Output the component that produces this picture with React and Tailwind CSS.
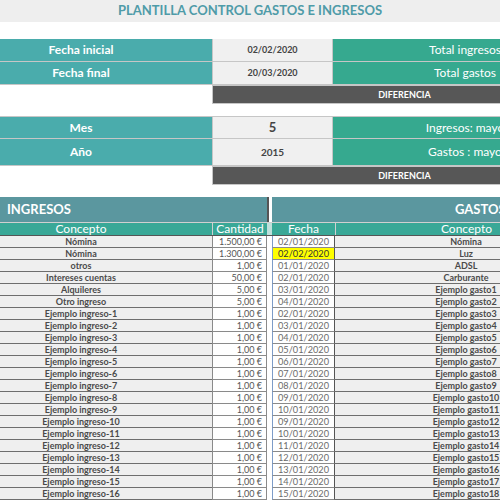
import React from "react";

const ingresos = [
  ["Nómina", "1.500,00 €"],
  ["Nómina", "1.300,00 €"],
  ["otros", "1,00 €"],
  ["Intereses cuentas", "50,00 €"],
  ["Alquileres", "5,00 €"],
  ["Otro ingreso", "5,00 €"],
  ...Array.from({ length: 16 }, (_, i) => [`Ejemplo ingreso-${i + 1}`, "1,00 €"]),
];

const gastos = [
  ["02/01/2020", "Nómina"],
  ["02/02/2020", "Luz"],
  ["01/01/2020", "ADSL"],
  ["02/01/2020", "Carburante"],
  ["03/01/2020", "Ejemplo gasto1"],
  ["04/01/2020", "Ejemplo gasto2"],
  ["02/01/2020", "Ejemplo gasto3"],
  ["03/01/2020", "Ejemplo gasto4"],
  ["04/01/2020", "Ejemplo gasto5"],
  ["05/01/2020", "Ejemplo gasto6"],
  ["06/01/2020", "Ejemplo gasto7"],
  ["07/01/2020", "Ejemplo gasto8"],
  ["08/01/2020", "Ejemplo gasto9"],
  ["09/01/2020", "Ejemplo gasto10"],
  ["10/01/2020", "Ejemplo gasto11"],
  ["09/01/2020", "Ejemplo gasto12"],
  ["10/01/2020", "Ejemplo gasto13"],
  ["11/01/2020", "Ejemplo gasto14"],
  ["12/01/2020", "Ejemplo gasto15"],
  ["13/01/2020", "Ejemplo gasto16"],
  ["14/01/2020", "Ejemplo gasto17"],
  ["15/01/2020", "Ejemplo gasto18"],
];

const TopRow = ({ label, value, total, h, valueClass }) => (
  <div className={`flex border-b border-[#c6c6c6] ${h}`}>
    <div className="w-[262px] bg-[#4aacac] flex items-center justify-center text-white font-bold text-[12px]">
      {label}
    </div>
    <div className={`w-[121px] bg-[#f0f0f0] border-l border-r border-[#c6c6c6] flex items-center justify-center text-[#444] font-bold ${valueClass}`}>
      {value}
    </div>
    <div className="w-[264px] bg-[#36a98f] flex items-center justify-center text-white text-[12px]">
      {total}
    </div>
  </div>
);

const Diferencia = ({ h }) => (
  <div className={`flex ${h}`}>
    <div className="w-[262px] bg-white" />
    <div className="w-[385px] bg-[#575757] border border-[#c6c6c6] flex items-center justify-center text-white font-bold text-[9px]">
      DIFERENCIA
    </div>
  </div>
);

export default function App() {
  return (
    <div className="w-[500px] h-[500px] overflow-hidden bg-white font-['Lato',sans-serif]">
      <div className="h-[22px] bg-[#eeeeee] flex items-center justify-center text-[#4f9ba8] font-bold text-[13px]">
        PLANTILLA CONTROL GASTOS E INGRESOS
      </div>

      {/* the sheet is scrolled ~50px to the right, so the first column starts off-screen */}
      <div className="ml-[-50px] w-[647px]">
        <div className="h-[17px]" />
        <TopRow label="Fecha inicial" value="02/02/2020" total="Total ingresos" h="h-[23px]" valueClass="text-[9px]" />
        <TopRow label="Fecha final" value="20/03/2020" total="Total gastos" h="h-[23px]" valueClass="text-[9px]" />
        <Diferencia h="h-[19px]" />

        <div className="h-[13px] border-b border-[#c6c6c6]" />
        <TopRow label="Mes" value="5" total="Ingresos: mayo" h="h-[22px]" valueClass="text-[13px]" />
        <TopRow label="Año" value="2015" total="Gastos : mayo" h="h-[27px]" valueClass="text-[10px]" />
        <Diferencia h="h-[19px]" />

        <div className="h-[12px]" />

        <div className="flex h-[25px]">
          <div className="w-[317px] bg-[#5b979f] flex items-center pl-[57px] text-white font-bold text-[13px]">
            INGRESOS
          </div>
          <div className="w-[5px] bg-white flex">
            <div className="w-[2px] bg-[#555]" />
          </div>
          <div className="w-[325px] bg-[#5b979f] flex items-center pl-[183px] text-white font-bold text-[13px]">
            GASTOS
          </div>
        </div>

        <div className="flex h-[14px] border-t border-[#d0d0d0] border-b border-b-[#555] text-white text-[12px]">
          <div className="w-[262px] bg-[#39a897] flex items-center justify-center">Concepto</div>
          <div className="w-[55px] bg-[#39a897] border-l border-[#d0d0d0] flex items-center justify-center">Cantidad</div>
          <div className="w-[5px] bg-[#bfe0db]" />
          <div className="w-[63px] bg-[#39a897] flex items-center justify-center">Fecha</div>
          <div className="w-[262px] bg-[#39a897] border-l border-[#d0d0d0] flex items-center justify-center">Concepto</div>
        </div>

        {ingresos.map(([concepto, cantidad], i) => {
          const [fecha, gasto] = gastos[i];
          const marked = i === 1;
          return (
            <div key={i} className="flex h-[12px] text-[9px] leading-none">
              <div className="w-[262px] bg-[#efefef] border-b border-[#6e6e6e] flex items-center justify-center text-[#4a4a4a] font-bold">
                {concepto}
              </div>
              <div className="w-[55px] bg-white border-l border-r border-b border-[#8a8a8a] flex items-center justify-end pr-[4px] text-[#555]">
                {cantidad}
              </div>
              <div className="w-[5px] bg-white" />
              <div
                className={`w-[63px] border-l border-l-[#7d9cc8] border-r border-r-[#555] border-b border-b-[#8a8a8a] flex items-center justify-center text-[9.2px] ${
                  marked ? "bg-[#ffff00] text-[#333]" : "bg-white text-[#6a6a6a]"
                }`}
              >
                {fecha}
              </div>
              <div className="w-[262px] bg-[#efefef] border-b border-[#6e6e6e] flex items-center justify-center text-[#4a4a4a] font-bold">
                {gasto}
              </div>
            </div>
          );
        })}
      </div>
    </div>
  );
}
